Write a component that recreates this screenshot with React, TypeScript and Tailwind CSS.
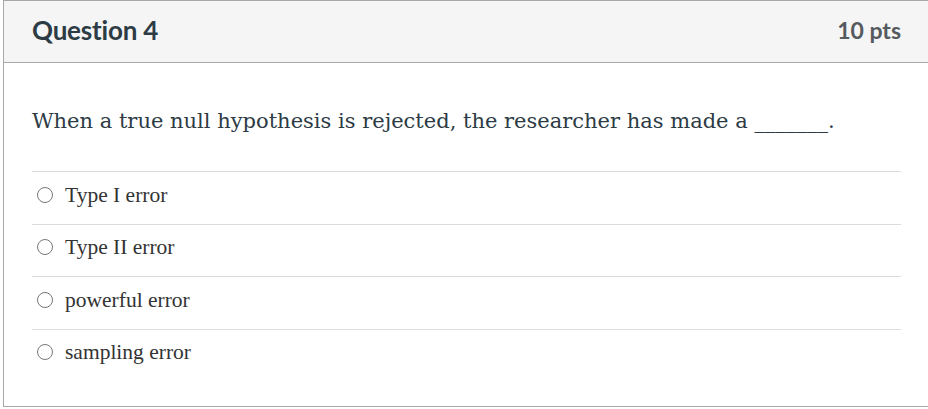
const ANSWERS = ['Type I error', 'Type II error', 'powerful error', 'sampling error'];

export default function App() {
  return (
    <div className="w-[928px] h-[409px] bg-white overflow-hidden">
      <div className="ml-[3px] w-[940px] h-[407px] border-l border-t border-b border-[#a8a8a8] flex flex-col">
        {/* Header */}
        <div className="h-[62px] bg-[#f5f5f5] border-b border-[#a8a8a8] flex items-center justify-between pl-[28px] pr-[42px] shrink-0">
          <h2 className="font-['Lato',sans-serif] font-bold text-[26px] text-[#2d3b45] tracking-[-0.2px] pb-[3px]">Question 4</h2>
          <span className="font-['Lato',sans-serif] font-bold text-[23px] text-[#555a5f] pb-[3px]">10 pts</span>
        </div>

        {/* Body */}
        <div className="pl-[28px] pr-[42px] pt-[41px]">
          <p className="font-['DejaVu_Serif',serif] text-[21px] leading-[34px] text-[#2d3b45] mb-[33px]">
            When a true null hypothesis is rejected, the researcher has made a _______.
          </p>
          <div className="flex flex-col">
            {ANSWERS.map(a => (
              <div key={a} className="border-t border-[#dcdcdc] h-[52.5px] flex items-center pl-[5px] gap-[12px] pb-[6px]">
                <span className="w-[16px] h-[16px] rounded-full border border-[#777] shrink-0" />
                <span className="font-['Liberation_Serif',serif] text-[21.5px] text-[#333]">{a}</span>
              </div>
            ))}
          </div>
        </div>
      </div>
    </div>
  );
}
